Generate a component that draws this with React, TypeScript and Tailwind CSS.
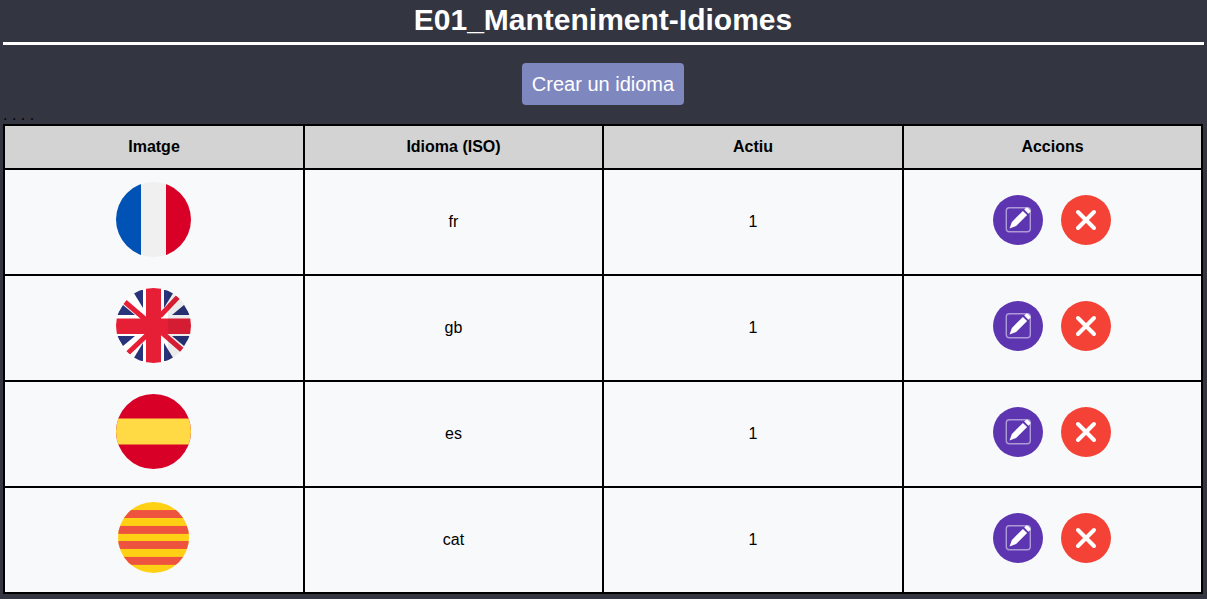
import type { ReactNode } from "react";

const Flag = ({ children, size = 75 }: { children: ReactNode; size?: number }) => (
  <svg width={size} height={size} viewBox="0 0 75 75" className="block">
    <defs>
      <clipPath id="flag-circle">
        <circle cx="37.5" cy="37.5" r="37.5" />
      </clipPath>
    </defs>
    <g clipPath="url(#flag-circle)">{children}</g>
  </svg>
);

const France = () => (
  <Flag>
    <rect width="25" height="75" fill="#0052b4" />
    <rect x="25" width="25" height="75" fill="#f0f0f0" />
    <rect x="50" width="25" height="75" fill="#d80027" />
  </Flag>
);

const Britain = () => (
  <Flag>
    <rect width="75" height="75" fill="#ffffff" />
    <path d="M16 2 H27 V20 Z" fill="#29337a" />
    <path d="M48 2 H59 L48 20 Z" fill="#29337a" />
    <path d="M1 27 L7 17 L19 27 Z" fill="#29337a" />
    <path d="M56 27 L68 17 L74 27 Z" fill="#29337a" />
    <path d="M1 48 L7 58 L19 48 Z" fill="#29337a" />
    <path d="M56 48 L68 58 L74 48 Z" fill="#29337a" />
    <path d="M16 73 H27 V55 Z" fill="#29337a" />
    <path d="M48 73 H59 L48 55 Z" fill="#29337a" />
    <path d="M9 14 L30 32" stroke="#e61f37" strokeWidth="5" />
    <path d="M12 65 L31 47" stroke="#e61f37" strokeWidth="5" />
    <path d="M62 9 L44 28" stroke="#e61f37" strokeWidth="5" />
    <path d="M66 62 L44 43" stroke="#e61f37" strokeWidth="5" />
    <path d="M30 0 H45 V30.5 H75 V46 H45 V75 H30 V46 H0 V30.5 H30 Z" fill="#e61f37" />
    <rect x="52" width="23" height="75" fill="#000" fillOpacity="0.08" />
  </Flag>
);

const Spain = () => (
  <Flag>
    <rect width="75" height="75" fill="#d80027" />
    <rect y="24.5" width="75" height="26" fill="#ffda44" />
  </Flag>
);

const Catalonia = () => (
  <Flag size={71}>
    <rect width="75" height="75" fill="#ffd014" />
    <rect y="8.5" width="75" height="8.4" fill="#ee5340" />
    <rect y="25.3" width="75" height="8.4" fill="#ee5340" />
    <rect y="41.2" width="75" height="8.4" fill="#ee5340" />
    <rect y="58" width="75" height="8.4" fill="#ee5340" />
  </Flag>
);

const EditButton = () => (
  <button className="flex h-[50px] w-[50px] items-center justify-center rounded-full bg-[#5e35b1]">
    <svg width="32" height="32" viewBox="0 0 32 32" fill="none">
      <rect x="4.3" y="3.7" width="24" height="24" rx="3" stroke="#fff" strokeOpacity="0.5" strokeWidth="1.4" />
      <path d="M9.9 17.9 L20.9 6.9 L25.1 11.1 L14.1 22.1 L7.5 24.5 Z" fill="#fff" />
      <path d="M22.2 5.6 L23.8 4 C24.5 3.3 25.3 3.3 26 4 L28 6 C28.7 6.7 28.7 7.5 28 8.2 L26.4 9.8 Z" fill="#fff" />
    </svg>
  </button>
);

const DeleteButton = () => (
  <button className="flex h-[50px] w-[50px] items-center justify-center rounded-full bg-[#f44336]">
    <svg width="24" height="24" viewBox="0 0 24 24" fill="none">
      <path d="M4 4 L20 20 M20 4 L4 20" stroke="#fff" strokeWidth="4" strokeLinecap="round" />
    </svg>
  </button>
);

const idiomes = [
  { iso: "fr", flag: <France /> },
  { iso: "gb", flag: <Britain /> },
  { iso: "es", flag: <Spain /> },
  { iso: "cat", flag: <Catalonia /> },
];

const cell = "border-2 border-black text-center align-middle";

const App = () => {
  return (
    <div className="h-[599px] overflow-hidden bg-[#333541] px-[3px] font-['Liberation_Sans',Arial,sans-serif] text-black">
      <h1 className="h-[42px] pr-px text-center text-[30px] leading-[40px] font-bold text-white">
        E01_Manteniment-Idiomes
      </h1>
      <hr className="border-t-[3px] border-white" />
      <div className="flex justify-center pt-[18px] pr-px pb-[4px]">
        <button className="h-[42px] w-[162px] rounded bg-[#7f87bf] text-[20px] text-white">
          Crear un idioma
        </button>
      </div>
      <p className="h-[15px] text-[16px] leading-[11px]">. . . .</p>
      <table className="w-[1200px] table-fixed border-collapse bg-[#f8f9fb] text-[16px]">
        <colgroup>
          <col className="w-[300px]" />
          <col className="w-[299px]" />
          <col className="w-[300px]" />
          <col className="w-[299px]" />
        </colgroup>
        <thead>
          <tr className="h-[44px] bg-[#d3d3d3]">
            <th className={cell}>Imatge</th>
            <th className={cell}>Idioma (ISO)</th>
            <th className={cell}>Actiu</th>
            <th className={cell}>Accions</th>
          </tr>
        </thead>
        <tbody>
          {idiomes.map((idioma) => (
            <tr key={idioma.iso} className="h-[106px]">
              <td className={cell}>
                <div className="flex justify-center pr-px pb-[5px]">{idioma.flag}</div>
              </td>
              <td className={cell}>{idioma.iso}</td>
              <td className={cell}>1</td>
              <td className={cell}>
                <div className="flex justify-center gap-[18px] pr-[2px] pb-[4px]">
                  <EditButton />
                  <DeleteButton />
                </div>
              </td>
            </tr>
          ))}
        </tbody>
      </table>
    </div>
  );
};

export default App;
